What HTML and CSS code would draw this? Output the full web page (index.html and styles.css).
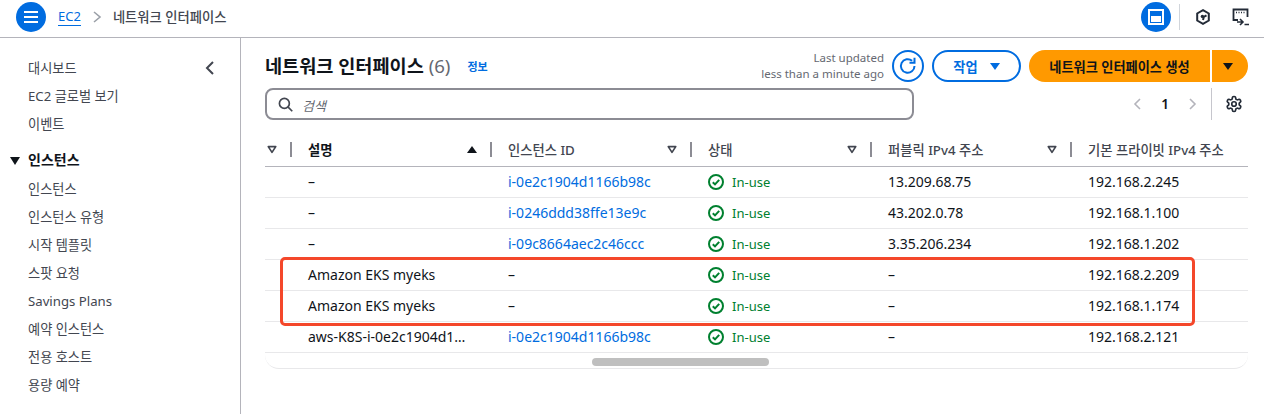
FILE: index.html
```html
<!DOCTYPE html>
<html lang="ko">
<head>
<meta charset="utf-8">
<title>네트워크 인터페이스</title>
<link rel="stylesheet" href="styles.css">
</head>
<body>
<svg class="sprites" width="0" height="0" aria-hidden="true">
  <symbol id="ok" viewBox="0 0 16 16"><circle cx="8" cy="8" r="7" fill="none" stroke="#00802f" stroke-width="2"/><path d="M4.800 8.200l2.200 2.200 4.200-4.600" fill="none" stroke="#00802f" stroke-width="2"/></symbol>
  <symbol id="filter" viewBox="0 0 12 10"><path d="M1.500 1.500h9L6 8.500z" fill="none" stroke="#424650" stroke-width="2" stroke-linejoin="round"/></symbol>
</svg>
<header class="topbar">
  <button class="menu-btn" aria-label="메뉴"><svg width="16" height="14" viewBox="0 0 16 14"><path d="M1 2h14M1 7h14M1 12h14" stroke="#fff" stroke-width="2"/></svg></button>
  <a class="crumb-link">EC2</a>
  <svg class="crumb-sep" width="10" height="14" viewBox="0 0 10 14"><path d="M2 2l6 5-6 5" fill="none" stroke="#9ba0a8" stroke-width="1.600"/></svg>
  <span class="crumb-cur">네트워크 인터페이스</span>
  <div class="top-actions">
    <button class="panel-btn" aria-label="패널"><svg width="16" height="16" viewBox="0 0 16 16"><rect x="1" y="1" width="14" height="14" fill="none" stroke="#fff" stroke-width="2"/><rect x="3" y="7" width="10" height="6" fill="#fff"/></svg></button>
    <span class="top-divider"></span>
    <svg class="hex" width="16" height="16" viewBox="0 0 16 16"><path d="M8 1.200l5.800 3.300v7L8 14.800l-5.800-3.300v-7z" fill="none" stroke="#232b37" stroke-width="2"/><path d="M11.500 6.400L8.800 8 8 11" fill="none" stroke="#232b37" stroke-width="2"/><circle cx="7.400" cy="7.400" r="1.700" fill="#232b37"/></svg>
    <svg class="shell" width="18" height="18" viewBox="0 0 18 18"><path d="M6 12H1.500V1.500h14V9" fill="none" stroke="#232b37" stroke-width="1.800"/><path d="M4 4.500h1M6.500 4.500h1M9 4.500h1M11.500 4.500h1" stroke="#232b37" stroke-width="1.600"/><path d="M5 14h5M8 11l3 3-3 3M12.500 16.500H17" fill="none" stroke="#232b37" stroke-width="1.600"/></svg>
  </div>
</header>
<div class="layout">
  <nav class="sidebar">
    <div class="nav-first"><a class="nav-item">대시보드</a><svg class="nav-close" width="10" height="14" viewBox="0 0 10 14"><path d="M8 1L2 7l6 6" fill="none" stroke="#424650" stroke-width="2"/></svg></div>
    <a class="nav-item">EC2 글로벌 보기</a>
    <a class="nav-item">이벤트</a>
    <div class="nav-section"><span class="tri"></span>인스턴스</div>
    <a class="nav-item">인스턴스</a>
    <a class="nav-item">인스턴스 유형</a>
    <a class="nav-item">시작 템플릿</a>
    <a class="nav-item">스팟 요청</a>
    <a class="nav-item">Savings Plans</a>
    <a class="nav-item">예약 인스턴스</a>
    <a class="nav-item">전용 호스트</a>
    <a class="nav-item">용량 예약</a>
  </nav>
  <main class="content">
    <div class="title-row">
      <h1 class="title">네트워크 인터페이스 <span class="count">(6)</span></h1>
      <a class="info">정보</a>
      <div class="title-actions">
        <div class="updated">Last updated<br>less than a minute ago</div>
        <button class="refresh" aria-label="새로고침"><svg width="20" height="20" viewBox="0 0 20 20"><path d="M16.500 10a6.800 6.800 0 1 1-2.400-5.200" fill="none" stroke="#006ce0" stroke-width="2"/><path d="M11.500 6.800h5V1.800" fill="none" stroke="#006ce0" stroke-width="2"/></svg></button>
        <button class="actions">작업<span class="caret caret-blue"></span></button>
        <div class="split">
          <button class="primary">네트워크 인터페이스 생성</button>
          <button class="primary-drop" aria-label="더보기"><span class="caret caret-dark"></span></button>
        </div>
      </div>
    </div>
    <div class="search-row">
      <label class="search">
        <svg width="15" height="15" viewBox="0 0 16 16"><circle cx="6.800" cy="6.800" r="5.300" fill="none" stroke="#424650" stroke-width="1.800"/><path d="M10.800 10.800l4.400 4.400" stroke="#424650" stroke-width="1.800"/></svg>
        <span class="placeholder">검색</span>
      </label>
      <div class="pager">
        <svg width="10" height="14" viewBox="0 0 10 14"><path d="M8 2L3 7l5 5" fill="none" stroke="#b4b4bb" stroke-width="1.600"/></svg>
        <span class="page-num">1</span>
        <svg width="10" height="14" viewBox="0 0 10 14"><path d="M2 2l5 5-5 5" fill="none" stroke="#b4b4bb" stroke-width="1.600"/></svg>
      </div>
      <div class="settings">
        <svg width="18" height="18" viewBox="0 0 24 24" fill="none" stroke="#232b37" stroke-width="2.200" stroke-linejoin="round"><path d="M12.220 2h-.44a2 2 0 0 0-2 2v.18a2 2 0 0 1-1 1.730l-.43.25a2 2 0 0 1-2 0l-.15-.08a2 2 0 0 0-2.730.73l-.22.38a2 2 0 0 0 .73 2.730l.15.1a2 2 0 0 1 1 1.720v.51a2 2 0 0 1-1 1.740l-.15.09a2 2 0 0 0-.73 2.730l.22.38a2 2 0 0 0 2.730.73l.15-.08a2 2 0 0 1 2 0l.43.25a2 2 0 0 1 1 1.730V20a2 2 0 0 0 2 2h.44a2 2 0 0 0 2-2v-.18a2 2 0 0 1 1-1.730l.43-.25a2 2 0 0 1 2 0l.15.08a2 2 0 0 0 2.730-.73l.22-.39a2 2 0 0 0-.73-2.730l-.15-.08a2 2 0 0 1-1-1.740v-.5a2 2 0 0 1 1-1.740l.15-.09a2 2 0 0 0 .73-2.730l-.22-.38a2 2 0 0 0-2.730-.73l-.15.08a2 2 0 0 1-2 0l-.43-.25a2 2 0 0 1-1-1.730V4a2 2 0 0 0-2-2z"/><circle cx="12" cy="12" r="3"/></svg>
      </div>
    </div>
    <div class="table-wrap">
      <table class="grid">
        <colgroup><col class="c0"><col class="c1"><col class="c2"><col class="c3"><col class="c4"><col class="c5"></colgroup>
        <thead>
          <tr>
            <th><div class="th-in first"><svg class="fi" width="10" height="9"><use href="#filter"/></svg></div></th>
            <th><div class="th-in dark">설명<span class="sort-up"></span></div></th>
            <th><div class="th-in">인스턴스 ID<svg class="fi" width="10" height="9"><use href="#filter"/></svg></div></th>
            <th><div class="th-in">상태<svg class="fi" width="10" height="9"><use href="#filter"/></svg></div></th>
            <th><div class="th-in">퍼블릭 IPv4 주소<svg class="fi" width="10" height="9"><use href="#filter"/></svg></div></th>
            <th><div class="th-in">기본 프라이빗 IPv4 주소</div></th>
          </tr>
        </thead>
        <tbody>
          <tr><td></td><td>–</td><td><a>i-0e2c1904d1166b98c</a></td><td><span class="ok"><svg width="16" height="16"><use href="#ok"/></svg>In-use</span></td><td>13.209.68.75</td><td>192.168.2.245</td></tr>
          <tr><td></td><td>–</td><td><a>i-0246ddd38ffe13e9c</a></td><td><span class="ok"><svg width="16" height="16"><use href="#ok"/></svg>In-use</span></td><td>43.202.0.78</td><td>192.168.1.100</td></tr>
          <tr><td></td><td>–</td><td><a>i-09c8664aec2c46ccc</a></td><td><span class="ok"><svg width="16" height="16"><use href="#ok"/></svg>In-use</span></td><td>3.35.206.234</td><td>192.168.1.202</td></tr>
          <tr><td></td><td>Amazon EKS myeks</td><td>–</td><td><span class="ok"><svg width="16" height="16"><use href="#ok"/></svg>In-use</span></td><td>–</td><td>192.168.2.209</td></tr>
          <tr><td></td><td>Amazon EKS myeks</td><td>–</td><td><span class="ok"><svg width="16" height="16"><use href="#ok"/></svg>In-use</span></td><td>–</td><td>192.168.1.174</td></tr>
          <tr><td></td><td>aws-K8S-i-0e2c1904d1…</td><td><a>i-0e2c1904d1166b98c</a></td><td><span class="ok"><svg width="16" height="16"><use href="#ok"/></svg>In-use</span></td><td>–</td><td>192.168.2.121</td></tr>
        </tbody>
      </table>
      <div class="scroll-track"><div class="scroll-thumb"></div></div>
      <div class="highlight"></div>
    </div>
  </main>
</div>
</body>
</html>
```
FILE: styles.css
```css
* { box-sizing: border-box; }
html, body { margin: 0; height: 414px; overflow: hidden; background: #fff; }
body { font-family: "Noto Sans", "Noto Sans CJK KR", sans-serif; font-size: 14px; color: #0f141a; }
button { font: inherit; padding: 0; cursor: pointer; }
.sprites { position: absolute; }

.topbar { height: 38px; border-bottom: 1px solid #b4b4bb; display: flex; align-items: center; padding-left: 16px; padding-bottom: 4px; }
.menu-btn { width: 30px; height: 30px; border: 0; border-radius: 50%; background: #006ce0; display: flex; align-items: center; justify-content: center; margin-right: 12px; }
.crumb-link { color: #006ce0; font-size: 13px; border-bottom: 1px solid #006ce0; line-height: 18px; }
.crumb-sep { margin: 0 11px 0 11px; }
.crumb-cur { color: #424650; font-size: 13.300px; font-weight: 500; }
.top-actions { margin-left: auto; display: flex; align-items: center; padding-right: 14px; }
.panel-btn { width: 30px; height: 30px; border: 0; border-radius: 50%; background: #006ce0; display: flex; align-items: center; justify-content: center; }
.top-divider { width: 1px; height: 26px; background: #d1d5db; margin: 0 15px 0 8px; }
.hex { margin-right: 21px; }

.layout { display: flex; height: 376px; }
.sidebar { width: 241px; flex: none; border-right: 1px solid #b4b4bb; padding: 16px 0 0 28px; display: flex; flex-direction: column; }
.nav-item { font-size: 13.200px; line-height: 28px; height: 28px; color: #424650; display: block; }
.nav-first { display: flex; align-items: center; justify-content: space-between; padding-right: 25px; }
.nav-section { position: relative; font-size: 14px; font-weight: 600; color: #0f141a; line-height: 28px; height: 29px; margin-top: 8px; }
.tri { position: absolute; left: -18px; top: 11px; border-left: 5px solid transparent; border-right: 5px solid transparent; border-top: 8px solid #0f141a; }

.content { flex: 1; min-width: 0; padding: 12px 16px 0 24px; }
.title-row { display: flex; align-items: center; height: 32px; }
.title { margin: 0; font-size: 18.600px; font-weight: 600; line-height: 32px; color: #0f141a; }
.count { font-weight: 400; color: #656871; }
.info { font-size: 11px; font-weight: 600; color: #006ce0; margin-left: 17px; }
.title-actions { margin-left: auto; display: flex; align-items: center; }
.updated { font-size: 11.500px; line-height: 16px; color: #656871; text-align: right; white-space: nowrap; margin-right: 8px; }
.refresh { width: 32px; height: 32px; border-radius: 50%; border: 2px solid #006ce0; background: #fff; display: flex; align-items: center; justify-content: center; margin-right: 8px; }
.actions { width: 89px; height: 32px; border-radius: 16px; border: 2px solid #006ce0; background: #fff; color: #006ce0; font-size: 13.200px; font-weight: 600; display: flex; align-items: center; justify-content: center; gap: 12px; margin-right: 8px; }
.caret { display: block; border-left: 5.500px solid transparent; border-right: 5.500px solid transparent; }
.caret-blue { border-top: 7px solid #006ce0; }
.caret-dark { border-top: 7px solid #0f141a; }
.split { display: flex; gap: 2px; }
.primary { width: 181px; height: 32px; border: 0; background: #ff9900; border-radius: 16px 0 0 16px; color: #0f141a; font-size: 13.200px; font-weight: 600; }
.primary-drop { width: 36px; height: 32px; border: 0; background: #ff9900; border-radius: 0 16px 16px 0; display: flex; align-items: center; justify-content: center; padding-right: 4px; }

.search-row { display: flex; align-items: center; height: 32px; margin-top: 6px; }
.search { width: 649px; height: 32px; border: 2px solid #8c8c94; border-radius: 8px; display: flex; align-items: center; gap: 9px; padding-left: 11px; }
.placeholder { font-style: italic; font-size: 13px; color: #656871; padding-top: 2px; }
.pager { margin-left: auto; display: flex; align-items: center; gap: 19px; }
.page-num { font-weight: 600; font-size: 13.500px; color: #0f141a; }
.settings { display: flex; align-items: center; height: 32px; border-left: 1px solid #c6c6cd; margin-left: 13px; padding: 0 5px 0 13px; }

.table-wrap { position: relative; margin-top: 14px; }
.grid { width: 983px; table-layout: fixed; border-collapse: collapse; }
.c0 { width: 26px; } .c1 { width: 200px; } .c2 { width: 200px; } .c3 { width: 180px; } .c4 { width: 200px; } .c5 { width: 177px; }
th { height: 32px; padding: 0; border-bottom: 1px solid #b4b4bb; text-align: left; font-weight: 500; font-size: 13.300px; color: #424650; }
.th-in { display: flex; align-items: center; justify-content: space-between; height: 15px; border-left: 2px solid #8c8c94; margin-left: -1px; padding: 0 14px 0 16px; white-space: nowrap; }
th:first-child .th-in { justify-content: flex-start; border-left: 0; margin-left: 0; padding-left: 2px; }
.dark { color: #0f141a; font-weight: 600; }
.fi { flex: none; }
.sort-up { display: block; border-left: 5.500px solid transparent; border-right: 5.500px solid transparent; border-bottom: 7px solid #0f141a; }
td { height: 31px; padding: 0 0 0 17px; border-bottom: 1px solid #e8e8ea; font-size: 14px; color: #0f141a; white-space: nowrap; overflow: hidden; }
td:first-child { padding: 0; }
td a { color: #006ce0; }
.ok { display: flex; align-items: center; gap: 8px; color: #00802f; font-size: 13px; }
.scroll-track { width: 983px; height: 16px; border-bottom: 1px solid #e8e8ea; border-radius: 0 0 14px 14px; position: relative; }
.scroll-thumb { position: absolute; left: 327px; top: 5px; width: 177px; height: 8px; border-radius: 4px; background: #bfbfbf; }
.highlight { position: absolute; left: 15px; top: 123px; width: 915px; height: 69px; border: 3px solid #f4472a; border-radius: 5px; pointer-events: none; }
```
